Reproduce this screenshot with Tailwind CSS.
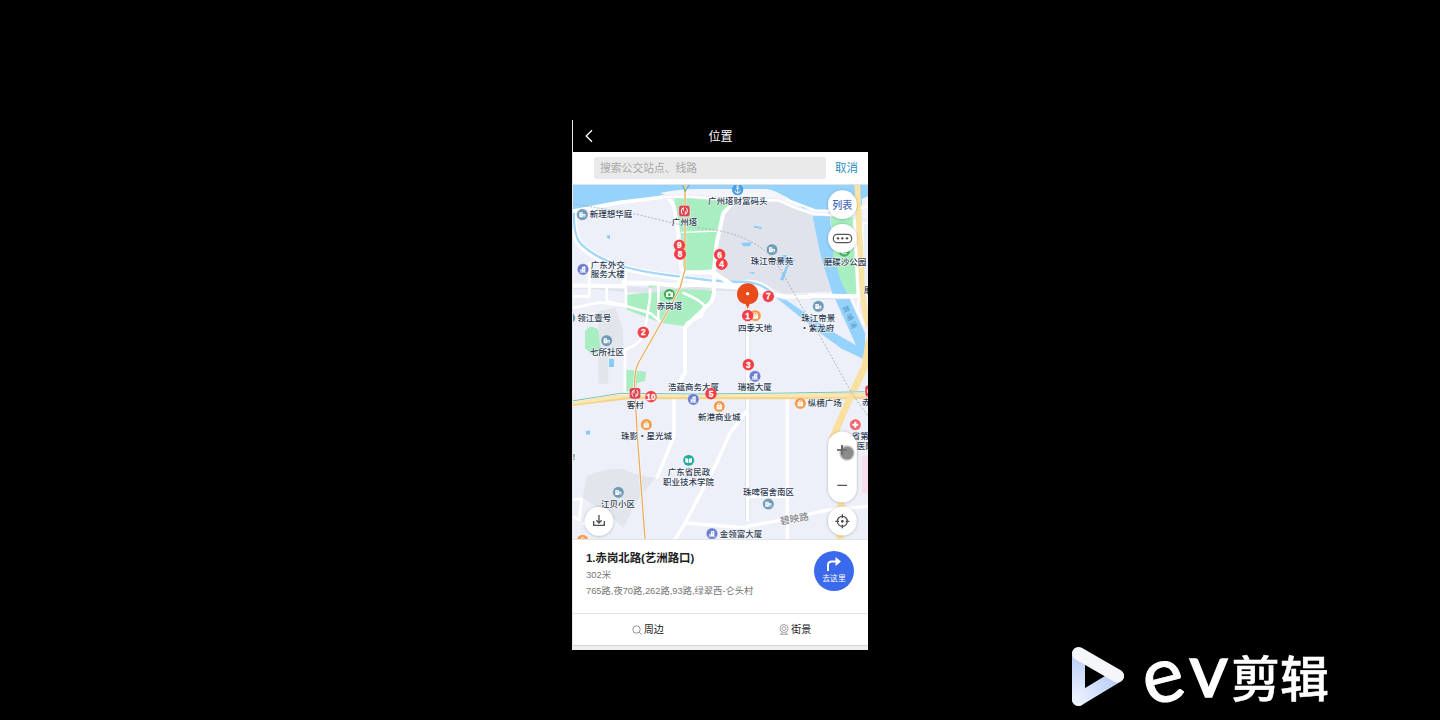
<!DOCTYPE html>
<html lang="zh-CN">
<head>
<meta charset="utf-8">
<title>位置</title>
<script src="https://cdn.jsdelivr.net/npm/@tailwindcss/browser@4"></script>
</head>
<body class="bg-black w-[1440px] h-[720px] overflow-hidden relative font-['Liberation_Sans','Noto_Sans_CJK_SC',sans-serif]">
<main class="flex flex-col ml-[572px] mt-[120px] w-[296px] h-[530px] border-l border-[#e5e7e8]">
  <header class="h-8 shrink-0 bg-black text-white flex items-center relative">
    <svg class="ml-3 w-2 h-[14px]" viewBox="0 0 8 14" fill="none" stroke="#fff" stroke-width="1.3"><path d="M7 1.2L1.2 7L7 12.8"/></svg>
    <h1 class="grow text-center text-[12px] leading-none pr-[20px] pt-px">位置</h1>
  </header>
  <div class="h-[33px] shrink-0 bg-white flex items-center border-b border-[#dce3e8]">
    <div class="ml-[21px] w-[232px] h-[22px] rounded-[3px] bg-[#eaeaea] text-[#a9a9a9] text-[10.8px] leading-[23px] pl-[6px]">搜索公交站点、线路</div>
    <span class="ml-[9px] pt-[2px] text-[11.5px] leading-none text-[#2b8cc4] whitespace-nowrap">取消</span>
  </div>
  <div class="h-[354px] shrink-0 overflow-hidden">
  <svg class="block w-[296px] h-[354px] -ml-px" viewBox="6 6 888 1062" fill="none" font-family="'Liberation Sans','Noto Sans CJK SC',sans-serif">
    <defs>
      <g id="home"><circle r="17.500" fill="#6f9bb8" stroke="#fff" stroke-width="1.500"/><path d="M-9 8V-7H1V-2H9V8z" fill="#fff"/><path d="M-5-3H-2M-5 1H-2M3 8V3H6V8" stroke="#6f9bb8" stroke-width="2"/></g>
      <g id="office"><circle r="17.500" fill="#6c7fd0" stroke="#fff" stroke-width="1.500"/><path d="M-8 7V0H-4V7zM-3 7V-7L7-9V7z" fill="#fff"/><path d="M0-3H4M0 1H4" stroke="#6c7fd0" stroke-width="1.500"/><path d="M-10 9H10" stroke="#fff" stroke-width="2"/></g>
      <g id="shop"><circle r="17.500" fill="#f29a4e" stroke="#fff" stroke-width="1.500"/><path d="M-8-4H8V9H-8z" fill="#fff"/><path d="M-4-4V-7Q0-12 4-7V-4" stroke="#fff" stroke-width="2.5"/><path d="M-4 0Q0 5 4 0" stroke="#f29a4e" stroke-width="2"/></g>
      <g id="metro"><rect x="-17" y="-17" width="34" height="34" rx="8" fill="#dc4250" stroke="#fff" stroke-width="1.5"/><path d="M-1-10Q-9-9-9 0Q-9 7-5 10M1 10Q9 9 9 0Q9-7 5-10" stroke="#fff" stroke-width="3"/><path d="M-3-9V0M3 9V0" stroke="#fff" stroke-width="2.500"/></g>
      <filter id="shadow" x="-30%" y="-30%" width="160%" height="160%"><feDropShadow dx="0" dy="1" stdDeviation="4" flood-opacity=".3"/></filter>
    </defs>
    <rect x="0" y="0" width="900" height="1080" fill="#eef0f9"/>
    <!-- districts -->
    <path d="M455 92L490 62L625 54L680 78L732 100L750 220L790 325L640 332L575 302L485 297L434 265z" fill="#e0e3eb"/>
    <path d="M85 385L135 375L160 440V500L115 515V602H85z" fill="#e2e5ea"/>
    <path d="M50 880L80 868Q150 845 185 870L255 885L200 955L160 1035L130 1005L38 945z" fill="#e2e5ec"/>
    <path d="M875 820L894 816V930H875z" fill="#f8deed"/>
    <!-- river -->
    <path d="M6 6H894V62L855 70L782 90L725 92L690 70L650 42L600 26L470 18L345 24L200 50L20 82L6 90z" fill="#96d3fc"/>
    <path d="M270 30Q330 17 390 18H590Q620 22 660 50L700 76L782 85L770 98L700 88L625 50L480 50L300 42z" fill="#f3f5fb"/>
    <path d="M875 48L894 40V105L880 108z" fill="#f3f5fb"/>
    <path d="M728 100L780 98L790 210L835 340L885 450V530L815 497L750 450L620 345L650 352L790 448L858 487L828 420L787 330L752 220z" fill="#96d3fc"/>
    <path d="M12 90Q10 160 35 190C90 240 180 265 300 280L420 296L500 304C570 285 600 325 620 345" stroke="#fff" stroke-width="18"/>
    <path d="M12 90Q10 160 35 185C90 238 180 262 300 277L420 292L500 297C570 290 600 325 640 355" stroke="#a2d6fb" stroke-width="7"/>
    <!-- parks -->
    <path d="M312 45L350 40L488 58L455 95L430 258L375 265L342 278L332 150z" fill="#a8eec1"/>
    <path d="M170 336L236 328V308L265 304L325 318L385 315L428 325V350L365 420L345 430L275 420L170 380z" fill="#a8eec1"/>
    <path d="M45 445Q60 420 85 440L92 500L70 518L45 495z" fill="#a8eec1"/>
    <path d="M168 560L228 566L225 594L200 600V625H168z" fill="#a8eec1"/>
    <path d="M782 98L850 104L862 330L835 338L815 300L790 220z" fill="#a8eec1"/>
    <path d="M552 128L575 132V138L552 134zM513 180L545 178L540 190H520zM110 158L120 156V167L112 166zM117 527H132V552H117zM47 745L60 742V754L49 755zM630 290L655 235L635 245V230L625 220L650 215L655 232L678 230L655 250L640 293zM536 268H555L550 274z" fill="#88ccf8"/>
    <!-- road network -->
    <g stroke="#dfe3eb" stroke-width="16" stroke-linejoin="round">
      <path d="M6 309H60L160 318L240 322L320 310L530 318L640 340L720 342L870 340M533 330V1010"/>
    </g>
    <g stroke="#fff" stroke-linejoin="round" stroke-linecap="round">
      <path d="M10 84L150 58L285 42M295 45L312 70L325 150V200L335 260L345 275" stroke-width="11"/>
      <path d="M285 42L350 40L480 50L625 52L680 76L730 92L790 96" stroke="#dbe5f1" stroke-width="11"/>
      <path d="M285 42L350 40L480 50L625 52L680 76L730 92L790 96" stroke-width="8"/>
      <path d="M650 50L735 82L790 84L860 80L894 70" stroke-width="7"/>
      <path d="M490 58L460 90L440 180L432 260V330L425 355L345 432V570L318 615" stroke-width="12"/>
      <path d="M6 308H60L160 310L165 280M172 300L240 300L320 308L380 305L530 315L640 340L720 342M320 308L345 268H430L500 315" stroke-width="13"/>
      <path d="M720 338L870 340M855 115L866 335" stroke-width="13"/>
      <path d="M533 340V1010M533 680L480 750L440 840L345 1020L315 1070M312 640V760L262 882M652 640V1065M533 1035L345 1020M533 1030L640 1010L780 980L894 970M533 940H652" stroke-width="10"/>
      <path d="M58 240V340M52 340H6M110 310V355L168 368V340L165 260M6 375L90 358L165 368L240 390L270 415M240 320V345L225 440Q220 480 165 500V630M265 310V410M340 330Q390 350 405 370L395 400L350 420M6 950L35 948L28 1010L6 1000M40 1020L70 1050" stroke-width="8"/>
      <path d="M845 345Q860 385 882 425M870 340Q855 375 872 400M894 120H878V230" stroke-width="5"/>
      <path d="M335 148L445 144" stroke-width="4"/>
    </g>
    <!-- main avenues -->
    <path d="M6 660L175 640L535 640L830 640L894 638" stroke="#f4d38c" stroke-width="18"/>
    <path d="M6 660L175 637L535 637L830 637L894 635" stroke="#fbe7b0" stroke-width="10"/>
    <path d="M862 6L867 130L876 300Q880 380 896 430" stroke="#f8e4a7" stroke-width="17"/>
    <path d="M898 470L885 550L835 655L790 760L815 900L810 1068" stroke="#fae0a0" stroke-width="21"/>
    <path d="M6 654L150 631L400 633L650 630L894 626" stroke="#fff" stroke-width="5"/>
    <path d="M6 654L150 631L400 633L650 630L894 626" stroke="#52b3b0" stroke-width="2.5"/>
    <path d="M345 6V260L330 315L290 390L205 540Q190 570 195 632L202 760L225 1068" stroke="#fff" stroke-width="7"/>
    <path d="M345 6V260L330 315L290 390L205 540Q190 570 195 632L202 760L225 1068" stroke="#e9ad58" stroke-width="4"/>
    <path d="M338 6L345 25L358 6" stroke="#53a4a4" stroke-width="3"/>
    <path d="M6 62L200 94L330 125L450 144Q560 165 620 240L680 345L745 450L845 630L894 700" stroke="#a5a7b0" stroke-width="2.500" stroke-dasharray="6 5"/>
    <!-- points of interest -->
    <use href="#home" x="37" y="95"/><use href="#office" x="39" y="259"/><use href="#home" x="606" y="200"/>
    <use href="#home" x="745" y="370"/><use href="#home" x="110" y="473"/><use href="#office" x="555" y="580"/>
    <use href="#office" x="370" y="649"/><use href="#shop" x="448" y="670"/><use href="#shop" x="691" y="661"/>
    <use href="#shop" x="229" y="725"/><use href="#home" x="145" y="928"/><use href="#home" x="595" y="963"/>
    <use href="#office" x="426" y="1052"/><use href="#shop" x="38" y="1072"/><use href="#shop" x="556" y="398"/>
    <use href="#home" x="-1" y="405"/><use href="#metro" x="343" y="84"/><use href="#metro" x="195" y="631"/><use href="#metro" x="902" y="624"/>
    <circle cx="503" cy="20" r="17" fill="#4b9edf"/><path d="M503 11V31M495 22Q496 30 503 31Q510 30 511 22M498 16H508" stroke="#fff" stroke-width="2.5"/><circle cx="503" cy="10" r="3" stroke="#fff" stroke-width="2"/>
    <circle cx="298" cy="334" r="17" fill="#3eaa55" stroke="#fff" stroke-width="1"/><path d="M288 328H294L296 325H301L303 328H309V342H288z" fill="#fff"/><circle cx="298" cy="335" r="4" fill="#3eaa55"/>
    <circle cx="823" cy="204" r="17" fill="#42b85b"/><path d="M815 212H831" stroke="#fff" stroke-width="3"/>
    <circle cx="356" cy="832" r="17" fill="#20aa9b" stroke="#fff" stroke-width="1"/><path d="M346 825L355 827V840L346 838zM357 827L366 825V838L357 840z" fill="#fff"/>
    <circle cx="856" cy="725" r="17" fill="#ee6670" stroke="#fff" stroke-width="1"/><path d="M856 716V734M847 725H865" stroke="#fff" stroke-width="6"/>
    <g fill="#2f3c55" font-size="25.5" font-weight="500" stroke="#fff" stroke-width="4" stroke-opacity=".75" stroke-linejoin="round" paint-order="stroke">
      <text x="59" y="103">新理想华庭</text>
      <text x="414" y="62">广州塔财富码头</text>
      <text x="305" y="126">广州塔</text>
      <text x="62" y="254">广东外交</text><text x="62" y="283">服务大楼</text>
      <text x="542" y="244">珠江帝景苑</text>
      <text x="761" y="247">磨碟沙公园</text>
      <text x="260" y="377">赤岗塔</text>
      <text x="22" y="414">领江壹号</text>
      <text x="504" y="443">四季天地</text>
      <text x="694" y="413">珠江帝景</text><text x="691" y="443">・紫龙府</text>
      <text x="60" y="517">七所社区</text>
      <text x="294" y="622">浩蕴商务大厦</text><text x="503" y="622">瑞福大厦</text>
      <text x="170" y="674">客村</text><text x="384" y="712">新港商业城</text><text x="713" y="669">纵横广场</text>
      <text x="153" y="768">珠影・星光城</text>
      <text x="293" y="875">广东省民政</text><text x="279" y="905">职业技术学院</text>
      <text x="519" y="937">珠啤宿舍南区</text><text x="93" y="972">江贝小区</text><text x="449" y="1061">金领富大厦</text>
      <text x="845" y="768">省第</text><text x="860" y="799">医院</text><text x="876" y="666">赤</text><text x="882" y="330">磨</text><text x="8" y="830">!</text>
    </g>
    <text transform="translate(632 1025) rotate(-10)" font-size="29" font-weight="500" fill="#85868c" stroke="#fff" stroke-width="3" paint-order="stroke">碧映路</text>
    <text transform="translate(816 372) rotate(65)" font-size="22" fill="#5699cb" letter-spacing="4">黄埔涌</text>
    <!-- selected stop -->
    <path d="M533 378L527 363C510 362 501 348 501 333A32 32 0 1 1 565 333C565 348 556 362 539 363z" fill="#e94b1b"/><circle cx="533" cy="332" r="5" fill="#fff"/>
    <g fill="#f23e46" stroke="#fff" stroke-opacity=".5" stroke-width="1">
      <circle cx="328" cy="187" r="17.500"/><circle cx="330" cy="213" r="17.500"/><circle cx="449" cy="215" r="17.500"/><circle cx="455" cy="243" r="17.500"/><circle cx="595" cy="340" r="17.500"/><circle cx="533" cy="398" r="17.500"/><circle cx="220" cy="448" r="17.500"/><circle cx="535" cy="545" r="17.500"/><circle cx="423" cy="632" r="17.500"/><circle cx="243" cy="641" r="17.500"/>
    </g>
    <g fill="#fff" font-size="25" font-weight="700" text-anchor="middle" stroke="#fff" stroke-width=".8">
      <text x="328" y="196">9</text><circle cx="330" cy="213" r="17.500" fill="#f23e46" stroke="none"/><text x="330" y="222">8</text><text x="449" y="224">6</text><circle cx="455" cy="243" r="17.500" fill="#f23e46" stroke="none"/><text x="455" y="252">4</text><text x="595" y="349">7</text><text x="533" y="407">1</text><text x="220" y="457">2</text><text x="535" y="554">3</text><text x="423" y="641">5</text><text x="243" y="650">10</text>
    </g>
    <!-- map controls -->
    <g fill="#fff" filter="url(#shadow)"><circle cx="817" cy="65" r="43"/><circle cx="817" cy="166" r="43"/><circle cx="87" cy="1015" r="43"/><rect x="774" y="746" width="86" height="212" rx="43"/><circle cx="817" cy="1014" r="43"/></g>
    <text x="787" y="77" font-size="30" font-weight="500" fill="#4468ba">列表</text>
    <rect x="790" y="154" width="55" height="25" rx="12" stroke="#555" stroke-width="3.500"/><g fill="#444"><circle cx="804" cy="166" r="3.500"/><circle cx="817" cy="166" r="3.500"/><circle cx="831" cy="166" r="3.500"/></g>
    <g stroke="#505050" stroke-width="4"><path d="M87 996V1019M79 1012L87 1020L95 1012M71 1014V1027H103V1014"/><circle cx="817" cy="1015" r="15"/><path d="M817 994V1005M817 1025V1036M796 1015H807M827 1015H838M802 907H831"/><path d="M801 801H831M816 786V816" stroke-width="5"/></g>
    <circle cx="817" cy="1015" r="4" fill="#444"/>
    <circle cx="831" cy="810" r="23" fill="#555" fill-opacity=".35"/><circle cx="831" cy="810" r="19" fill="#737373" fill-opacity=".7"/>
  </svg>
  </div>
  <section class="h-[75px] shrink-0 bg-white border-t border-b border-[#e2e3e5] flex justify-between">
    <div class="pl-[13px] pt-[10px]">
      <h2 class="text-[11.4px] leading-4 font-bold text-[#222] whitespace-nowrap">1.赤岗北路(艺洲路口)</h2>
      <p class="text-[9.4px] leading-4 text-[#777] mt-px">302米</p>
      <p class="text-[9.3px] leading-4 text-[#777] whitespace-nowrap">765路,夜70路,262路,93路,绿翠西-仑头村</p>
    </div>
    <div class="mt-[11px] mr-[14px] w-10 h-10 rounded-full bg-[#3b69ec] text-white flex flex-col items-center">
      <svg class="mt-[6px] w-4 h-[15px]" viewBox="0 0 16 15"><path d="M2 14V8Q2 4.500 6 4.500H11" fill="none" stroke="#fff" stroke-width="2"/><path d="M9.500 0L15 4.500L9.500 9z" fill="#fff"/></svg>
      <span class="text-[7.8px] leading-[13px] whitespace-nowrap">去这里</span>
    </div>
  </section>
  <nav class="h-[32px] shrink-0 bg-white flex text-[10px] leading-none text-[#222] border-b border-[#d5d8db]">
    <div class="w-[150px] flex items-center justify-center gap-[2px]"><svg class="w-[10px] h-[10px]" viewBox="0 0 10 10" fill="none" stroke="#888" stroke-width=".9"><circle cx="4.500" cy="4.500" r="3.700"/><path d="M7.200 7.200L9.600 9.600"/></svg><span>周边</span></div>
    <div class="w-[146px] flex items-center justify-center gap-[2px]"><svg class="w-[10px] h-[11px]" viewBox="0 0 10 11" fill="none" stroke="#888" stroke-width=".8"><circle cx="5" cy="4.500" r="4"/><circle cx="5" cy="4.500" r="1.900"/><path d="M3 8.500L1.500 10.300H8.500L7 8.500"/></svg><span>街景</span></div>
  </nav>
  <div class="h-[4px] shrink-0 bg-[#eceef0]"></div>
</main>
<div class="absolute left-[1072px] top-[646px] w-[270px] h-[62px] text-white">
  <svg class="absolute left-0 top-0 w-[52px] h-[60px]" viewBox="0 0 52 60" fill="none">
    <defs><linearGradient id="lg" x1="0" y1="0" x2="0" y2="1"><stop offset="0" stop-color="#b9cdf5"/><stop offset="1" stop-color="#edf3ff"/></linearGradient><linearGradient id="lb" gradientUnits="userSpaceOnUse" x1="6" y1="54" x2="46" y2="30"><stop offset="0" stop-color="#eaf1ff"/><stop offset="1" stop-color="#b5caf5"/></linearGradient></defs>
    <circle cx="6.500" cy="53.500" r="6.500" fill="#edf3ff"/><rect y="9" width="13" height="44" fill="url(#lg)"/>
    <path d="M6.500 53.500L45.500 30" stroke="url(#lb)" stroke-width="13" stroke-linecap="round"/>
    <path d="M6.500 7.500L45.500 30" stroke="#f5f6fa" stroke-width="13" stroke-linecap="round"/>
  </svg>
  <span class="absolute left-[70px] top-[-14px] font-['Lato'] text-[78px] leading-[80px] -rotate-[14deg] origin-[21px_46px] [-webkit-text-stroke:1px_white]">e</span>
  <span class="absolute left-[117px] top-[-18px] font-['Lato'] text-[76px] leading-[80px] [-webkit-text-stroke:1.5px_white]">v</span>
  <span class="absolute left-[159px] top-[5px] font-['Noto_Sans_CJK_SC'] font-medium text-[49px] leading-[50px] whitespace-nowrap [-webkit-text-stroke:0.5px_white]">剪辑</span>
</div>
</body>
</html>
